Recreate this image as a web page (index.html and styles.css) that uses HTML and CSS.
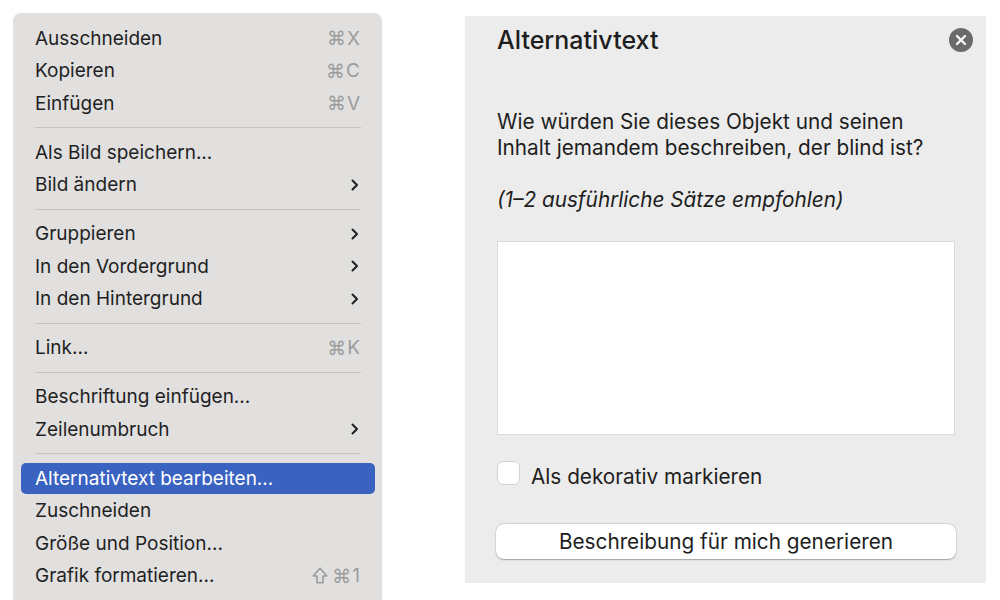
FILE: index.html
```html
<!DOCTYPE html>
<html lang="de">
<head>
<meta charset="utf-8">
<title>Alternativtext</title>
<link rel="stylesheet" href="styles.css">
</head>
<body>
<div class="menu">
  <div class="item"><span>Ausschneiden</span><span class="key"><span class="cmd">⌘</span>X</span></div>
  <div class="item"><span>Kopieren</span><span class="key"><span class="cmd">⌘</span>C</span></div>
  <div class="item"><span>Einfügen</span><span class="key"><span class="cmd">⌘</span>V</span></div>
  <div class="sep"></div>
  <div class="item"><span>Als Bild speichern...</span></div>
  <div class="item"><span>Bild ändern</span><svg class="chev" viewBox="0 0 8 12"><path d="M1.5 1.5 L6 6 L1.5 10.5"/></svg></div>
  <div class="sep"></div>
  <div class="item"><span>Gruppieren</span><svg class="chev" viewBox="0 0 8 12"><path d="M1.5 1.5 L6 6 L1.5 10.5"/></svg></div>
  <div class="item"><span>In den Vordergrund</span><svg class="chev" viewBox="0 0 8 12"><path d="M1.5 1.5 L6 6 L1.5 10.5"/></svg></div>
  <div class="item"><span>In den Hintergrund</span><svg class="chev" viewBox="0 0 8 12"><path d="M1.5 1.5 L6 6 L1.5 10.5"/></svg></div>
  <div class="sep"></div>
  <div class="item"><span>Link...</span><span class="key"><span class="cmd">⌘</span>K</span></div>
  <div class="sep"></div>
  <div class="item"><span>Beschriftung einfügen...</span></div>
  <div class="item"><span>Zeilenumbruch</span><svg class="chev" viewBox="0 0 8 12"><path d="M1.5 1.5 L6 6 L1.5 10.5"/></svg></div>
  <div class="sep"></div>
  <div class="item active"><span>Alternativtext bearbeiten...</span></div>
  <div class="item"><span>Zuschneiden</span></div>
  <div class="item"><span>Größe und Position...</span></div>
  <div class="item"><span>Grafik formatieren...</span><span class="key"><svg class="shift" viewBox="0 0 16 17"><path d="M8 1.2 L14.8 9 H11 V15.8 H5 V9 H1.2 Z"/></svg><span class="cmd">⌘</span>1</span></div>
</div>

<div class="panel">
  <div class="header">
    <h1 class="title">Alternativtext</h1>
    <span class="close"><svg viewBox="0 0 24 24"><circle cx="12" cy="12" r="12" fill="#6b6b6b"/><path d="M8 8 L16 16 M16 8 L8 16" stroke="#fff" stroke-width="2.2" stroke-linecap="round"/></svg></span>
  </div>
  <p class="question">Wie würden Sie dieses Objekt und seinen Inhalt jemandem beschreiben, der blind ist?</p>
  <p class="hint">(1–2 ausführliche Sätze empfohlen)</p>
  <div class="textbox"></div>
  <label class="check"><span class="box"></span><span class="label">Als dekorativ markieren</span></label>
  <div class="button">Beschreibung für mich generieren</div>
</div>
</body>
</html>
```

FILE: styles.css
```css
html, body {
  margin: 0;
  padding: 0;
  background: #ffffff;
  height: 600px;
  overflow: hidden;
}
body {
  display: flex;
  align-items: flex-start;
  font-family: Inter, "Liberation Sans", sans-serif;
  color: #1e1e1e;
}
.menu {
  margin: 13px 0 0 13px;
  width: 369px;
  height: 600px;
  box-sizing: border-box;
  background: #e1e0df;
  border-radius: 8px 8px 0 0;
  padding-top: 9px;
  display: flex;
  flex-direction: column;
}
.item {
  height: 32.5px;
  flex: none;
  margin: 0 7px 0 8px;
  padding: 0 15px 0 14px;
  display: flex;
  align-items: center;
  justify-content: space-between;
  font-size: 19px;
  color: #1f1f1f;
  border-radius: 5px;
}
.item.active {
  height: 31px;
  margin-top: 0.75px;
  margin-bottom: 0.75px;
  background: #3a62c0;
  color: #ffffff;
}
.key {
  color: #9c9c9c;
  font-size: 19px;
  display: flex;
  align-items: center;
}
.cmd {
  font-family: "DejaVu Sans", sans-serif;
  font-size: 19px;
  margin-right: 1px;
}
.shift {
  width: 16px;
  height: 17px;
  margin-right: 4px;
}
.shift path {
  fill: none;
  stroke: #9c9c9c;
  stroke-width: 1.6;
  stroke-linejoin: round;
}
.chev {
  width: 8px;
  height: 12px;
  margin-right: 1px;
}
.chev path {
  fill: none;
  stroke: #1f1f1f;
  stroke-width: 2;
  stroke-linecap: round;
  stroke-linejoin: round;
}
.sep {
  height: 16.5px;
  flex: none;
  margin: 0 21px 0 22px;
  display: flex;
  align-items: center;
}
.sep::after {
  content: "";
  display: block;
  width: 100%;
  height: 1px;
  background: #c6c5c4;
}
.panel {
  margin: 16px 0 0 83px;
  width: 521px;
  height: 567px;
  box-sizing: border-box;
  background: #ececec;
  padding: 10px 31px 0 32px;
  display: flex;
  flex-direction: column;
}
.header {
  display: flex;
  align-items: center;
  justify-content: space-between;
  margin-right: -18px;
  height: 28px;
}
.title {
  margin: 0;
  font-size: 25px;
  font-weight: 500;
  line-height: 28px;
  color: #1e1e1e;
}
.close {
  width: 24px;
  height: 24px;
  display: block;
}
.close svg {
  width: 24px;
  height: 24px;
  display: block;
}
.question {
  margin: 55px 0 0 0;
  font-size: 20.75px;
  line-height: 26px;
  color: #1e1e1e;
}
.hint {
  margin: 26px 0 0 0;
  font-size: 20.75px;
  line-height: 26px;
  font-style: italic;
  color: #1e1e1e;
}
.textbox {
  margin-top: 28px;
  height: 194px;
  background: #ffffff;
  border: 1px solid #dadada;
  box-sizing: border-box;
}
.check {
  margin-top: 26px;
  height: 24px;
  display: flex;
  align-items: center;
  gap: 11px;
  font-size: 20.75px;
  color: #1e1e1e;
}
.box {
  width: 23px;
  height: 24px;
  box-sizing: border-box;
  background: #ffffff;
  border: 1px solid #d2d2d2;
  border-radius: 6px;
}
.label {
  position: relative;
  top: 3px;
}
.button {
  margin: 39px -1px 0 -1px;
  height: 35px;
  background: #ffffff;
  border-radius: 8px;
  box-shadow: 0 0.5px 1.5px rgba(0,0,0,0.3), 0 0 0 0.5px rgba(0,0,0,0.08);
  display: flex;
  align-items: center;
  justify-content: center;
  font-size: 20.75px;
  color: #1e1e1e;
}
```
